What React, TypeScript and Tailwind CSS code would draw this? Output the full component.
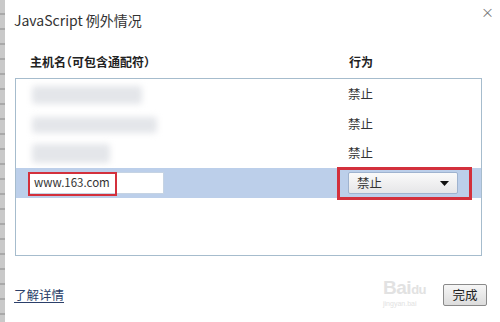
import React from 'react';

const FONT = { fontFamily: '"Microsoft YaHei", "Noto Sans CJK SC", "Liberation Sans", sans-serif' };

const ROWS = [
  { h: 'h-[31px]', blur: 'w-[110px] h-[18px]' },
  { h: 'h-[29px]', blur: 'w-[125px] h-[16px]' },
  { h: 'h-[29px]', blur: 'w-[78px] h-[19px]' },
];

export default function App() {
  return (
    <div className="flex w-[500px] h-[322px] bg-white text-[#333] overflow-hidden" style={FONT}>
      {/* window edge behind the dialog */}
      <div className="w-[5px] shrink-0 bg-[repeating-linear-gradient(to_bottom,#c9c9c9_0px,#c9c9c9_13px,#a9a9a9_13px,#a9a9a9_15px)]" />

      <div className="relative flex-1 flex flex-col">
        <div className="flex items-start justify-between h-[45px] pl-[9px] pr-[6px]">
          <h1 className="pt-[10px] text-[14px] leading-[20px] font-normal">JavaScript 例外情况</h1>
          <span className="pt-[4px] text-[13px] leading-[16px] text-[#777]">×</span>
        </div>

        <div className="flex items-center h-[33px] pl-[25px] text-[12px] font-semibold text-[#222]">
          <span className="w-[319px] [font-feature-settings:'halt']">主机名（可包含通配符）</span>
          <span>行为</span>
        </div>

        <div className="ml-[10px] w-[467px] h-[178px] border border-[#a6bccd] flex flex-col">
          {ROWS.map((r, i) => (
            <div key={i} className={`flex items-center ${r.h} text-[12.5px]`}>
              <div className="w-[332px] pl-[16px]">
                <div className={`${r.blur} bg-[#e4e6ea] rounded-[3px] blur-[3px]`} />
              </div>
              <span>禁止</span>
            </div>
          ))}

          <div className="flex items-center h-[30px] bg-[#bccfea]">
            <div className="w-[332px] pl-[12px]">
              <div className="relative w-[136px] h-[22px] bg-white border border-[#c5d3e3] flex items-center pl-[5px] text-[11.5px]">
                www.163.com
                <div className="absolute left-[-1px] top-[-1px] w-[89px] h-[24px] border-2 border-[#d3303c]" />
              </div>
            </div>
            <div className="relative">
              <div className="w-[110px] h-[22px] flex items-center justify-between px-[8px] rounded-[2px] border border-[#9fb3cf] bg-[linear-gradient(to_bottom,#fafafa,#e6e6e8)] text-[12.5px]">
                <span>禁止</span>
                <svg width="9" height="5" viewBox="0 0 9 5"><path d="M0 0h9L4.5 5z" fill="#111" /></svg>
              </div>
              <div className="absolute left-[-11px] top-[-5px] w-[135px] h-[33px] border-[3px] border-[#d3303c]" />
            </div>
          </div>
        </div>

        <div className="relative flex items-center justify-between mt-[28px] pl-[9px] pr-[13px]">
          <a className="text-[12.5px] text-[#2b3f6a] underline underline-offset-2">了解详情</a>
          {/* watermark */}
          <div className="absolute left-[378px] top-[-6px] pointer-events-none text-[#e2e2e2] leading-none" style={{ fontFamily: '"Liberation Sans", sans-serif' }}>
            <div className="text-[19px] font-bold tracking-tight">Bai<span className="text-[13px]">du</span></div>
            <div className="text-[7px] mt-[3px]">jingyan.bai</div>
          </div>
          <button className="relative w-[44px] h-[22px] border border-[#8a8a8a] rounded-[2px] bg-[linear-gradient(to_bottom,#f6f6f6,#dcdcdc)] text-[12.5px] text-[#222]">
            完成
          </button>
        </div>
      </div>
    </div>
  );
}
